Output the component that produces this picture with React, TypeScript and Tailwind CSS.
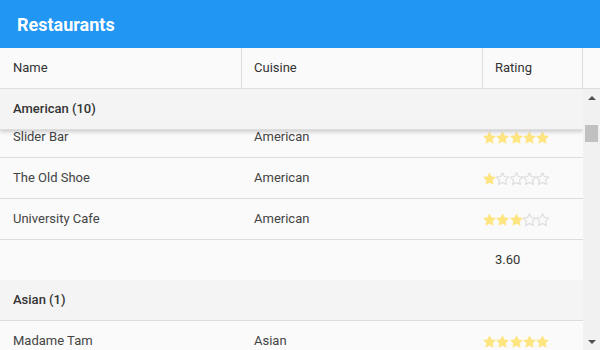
import React from 'react';

interface Restaurant {
  name: string;
  cuisine: string;
  rating: number;
}

const Star: React.FC<{ filled: boolean }> = ({ filled }) => (
  <svg width="13" height="13" viewBox="0 0 24 24" className="shrink-0">
    <path
      d="M12 1.2l3.5 7.2 7.9 1.1-5.7 5.6 1.3 7.9L12 19.3 4.9 23l1.4-7.9L.6 9.5l7.9-1.1z"
      fill={filled ? '#ffe57f' : 'none'}
      stroke={filled ? '#ffe57f' : '#dcdcdc'}
      strokeWidth={filled ? 0.5 : 2}
      strokeLinejoin="round"
    />
  </svg>
);

const Stars: React.FC<{ value: number }> = ({ value }) => (
  <div className="flex items-center gap-[0.25px]">
    {[1, 2, 3, 4, 5].map((i) => (
      <Star key={i} filled={i <= value} />
    ))}
  </div>
);

const Row: React.FC<{ item: Restaurant; className?: string }> = ({ item, className = '' }) => (
  <div className={`flex h-[41px] items-center border-b border-[#dddddd] bg-[#fafafa] ${className}`}>
    <div className="w-[242px] pl-[13px] text-[#444]">{item.name}</div>
    <div className="w-[241px] pl-[12px] text-[#444]">{item.cuisine}</div>
    <div className="w-[100px]">
      <Stars value={item.rating} />
    </div>
  </div>
);

const GroupHeader: React.FC<{ label: string; className?: string }> = ({ label, className = '' }) => (
  <div className={`flex h-[41px] items-center border-b border-[#dddddd] bg-[#f4f4f4] pl-[13px] font-medium text-[#333] ${className}`}>
    {label}
  </div>
);

const american: Restaurant[] = [
  { name: 'Slider Bar', cuisine: 'American', rating: 5 },
  { name: 'The Old Shoe', cuisine: 'American', rating: 1 },
  { name: 'University Cafe', cuisine: 'American', rating: 3 },
];

export default function App() {
  return (
    <div className="flex h-[350px] w-[600px] flex-col overflow-hidden bg-[#fafafa] text-[13px]" style={{ fontFamily: 'Roboto, "Liberation Sans", sans-serif' }}>
      <div className="flex h-[48px] shrink-0 items-center bg-[#2196f3] pl-[17px] text-[18px] font-bold text-white">
        Restaurants
      </div>

      <div className="flex h-[41px] shrink-0 items-center border-b border-[#dddddd] bg-[#fafafa] text-[#333]">
        <div className="flex h-full w-[242px] items-center border-r border-[#dddddd] pl-[13px]">Name</div>
        <div className="flex h-full w-[241px] items-center border-r border-[#dddddd] pl-[12px]">Cuisine</div>
        <div className="flex h-full w-[100px] items-center border-r border-[#dddddd] pl-[12px]">Rating</div>
      </div>

      <div className="flex min-h-0 flex-1">
        <div className="w-[583px] overflow-hidden">
          <GroupHeader label="American (10)" className="relative z-10 shadow-[0_2px_4px_rgba(0,0,0,0.18)]" />
          <Row item={american[0]} className="-mt-[13px]" />
          <Row item={american[1]} />
          <Row item={american[2]} />
          <div className="flex h-[40px] items-center bg-[#fafafa]">
            <div className="w-[483px]" />
            <div className="pl-[12px] text-[#333]">3.60</div>
          </div>
          <GroupHeader label="Asian (1)" />
          <Row item={{ name: 'Madame Tam', cuisine: 'Asian', rating: 5 }} />
        </div>

        <div className="flex w-[17px] flex-col items-center bg-[#f1f1f1]">
          <div className="flex h-[17px] w-full items-center justify-center">
            <div className="h-0 w-0 border-x-[4px] border-b-[4px] border-x-transparent border-b-[#505050]" />
          </div>
          <div className="mt-[19px] h-[17px] w-[13px] bg-[#c1c1c1]" />
          <div className="flex-1" />
          <div className="flex h-[17px] w-full items-center justify-center">
            <div className="h-0 w-0 border-x-[4px] border-t-[4px] border-x-transparent border-t-[#505050]" />
          </div>
        </div>
      </div>
    </div>
  );
}
